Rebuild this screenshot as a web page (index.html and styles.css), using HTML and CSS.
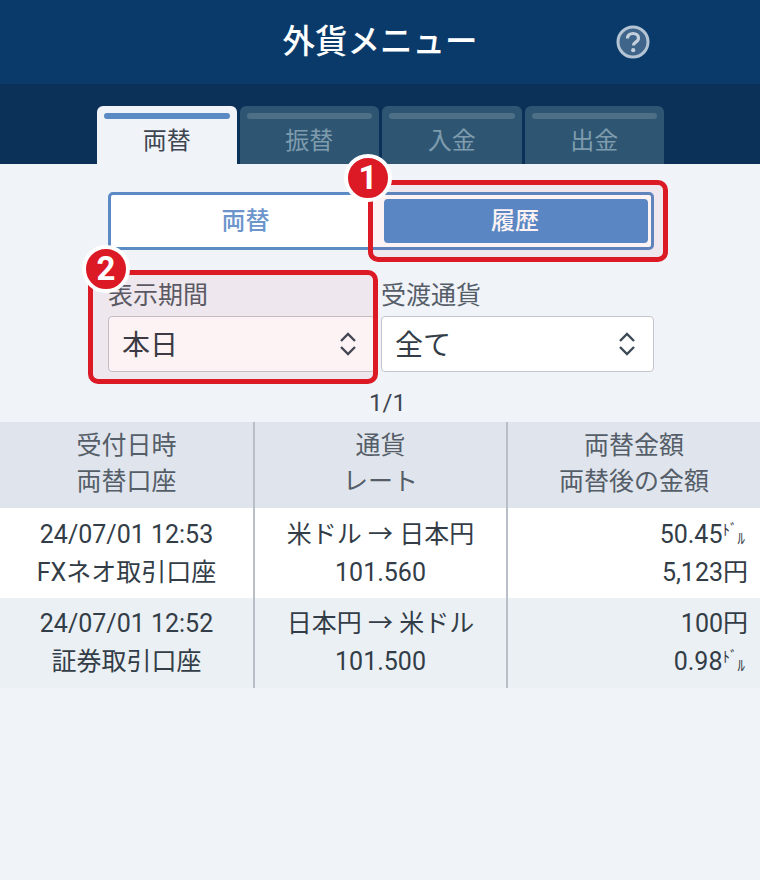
FILE: index.html
```html
<!DOCTYPE html>
<html lang="ja">
<head>
<meta charset="UTF-8">
<meta name="viewport" content="width=device-width, initial-scale=1.0">
<title>外貨メニュー</title>
<link rel="stylesheet" href="styles.css">
</head>
<body>

<div class="header">
    <h1 class="header-title">外貨メニュー</h1>
    <svg class="help-icon" width="34" height="34" viewBox="0 0 34 34" fill="none">
        <circle cx="17" cy="17" r="15" fill="#ffffff" fill-opacity="0.22" stroke="#b4c4d4" stroke-width="3"/>
        <path d="M11.5 13.5c0-3.2 2.4-5 5.6-5 3.1 0 5.4 1.7 5.4 4.5 0 2.1-1.2 3.1-2.7 4.1-1.4.9-2.3 1.6-2.3 3.4" stroke="#c4d0dc" stroke-width="3.2"/>
        <circle cx="17.2" cy="25.2" r="2.1" fill="#c4d0dc"/>
    </svg>
</div>

<div class="tabs">
    <div class="tab active"><span class="tab-bar"></span>両替</div>
    <div class="tab"><span class="tab-bar"></span>振替</div>
    <div class="tab"><span class="tab-bar"></span>入金</div>
    <div class="tab"><span class="tab-bar"></span>出金</div>
</div>

<div class="content">
    <div class="segment">
        <div class="segment-item">両替</div>
        <div class="segment-item selected">履歴</div>
        <div class="callout callout-history"><span class="badge">1</span></div>
    </div>

    <div class="filters">
        <div class="filter">
            <label class="filter-label">表示期間</label>
            <div class="select"><span class="select-text">本日</span>
                <svg width="18" height="26" viewBox="0 0 18 26" fill="none" stroke="#3f4a58" stroke-width="2.4"><path d="M2 10l7-7 7 7"/><path d="M2 16l7 7 7-7"/></svg>
            </div>
        </div>
        <div class="filter">
            <label class="filter-label">受渡通貨</label>
            <div class="select"><span class="select-text">全て</span>
                <svg width="18" height="26" viewBox="0 0 18 26" fill="none" stroke="#3f4a58" stroke-width="2.4"><path d="M2 10l7-7 7 7"/><path d="M2 16l7 7 7-7"/></svg>
            </div>
        </div>
        <div class="callout callout-period"><span class="badge">2</span></div>
    </div>
</div>

<div class="page-count">1/1</div>

<div class="history">
    <div class="row row-head">
        <div class="cell">受付日時<br>両替口座</div>
        <div class="cell">通貨<br>レート</div>
        <div class="cell">両替金額<br>両替後の金額</div>
    </div>
    <div class="row row-first">
        <div class="cell">24/07/01 12:53<br>FXネオ取引口座</div>
        <div class="cell">米ドル → 日本円<br>101.560</div>
        <div class="cell amount">50.45<span class="dollar"><span>ﾄﾞ</span><span class="low">ﾙ</span></span><br>5,123円</div>
    </div>
    <div class="row row-alt">
        <div class="cell">24/07/01 12:52<br>証券取引口座</div>
        <div class="cell">日本円 → 米ドル<br>101.500</div>
        <div class="cell amount">100円<br>0.98<span class="dollar"><span>ﾄﾞ</span><span class="low">ﾙ</span></span></div>
    </div>
</div>

</body>
</html>
```

FILE: styles.css
```css
body {
    font-family: Roboto, "Noto Sans CJK JP", sans-serif;
    margin: 0;
    padding: 0;
    background-color: #f0f3f8;
    color: #333d47;
}
.header {
    position: relative;
    height: 84px;
    background-color: #0a3a6a;
    display: flex;
    align-items: center;
    justify-content: center;
}
.header-title {
    margin: 0;
    color: #fff;
    font-size: 32.5px;
    font-weight: 500;
    line-height: 84px;
}
.help-icon {
    position: absolute;
    left: 616px;
    top: 25px;
}
.tabs {
    height: 58px;
    padding: 22px 0 0 1px;
    background-color: #0c3159;
    display: flex;
    justify-content: center;
    gap: 3px;
}
.tab {
    width: 139.5px;
    box-sizing: border-box;
    padding: 7px 7px 0;
    background-color: #2e5672;
    border-radius: 6px 6px 0 0;
    color: #7f9cae;
    font-size: 24px;
    line-height: 40px;
    text-align: center;
}
.tab-bar {
    display: block;
    height: 6px;
    margin-bottom: 2px;
    border-radius: 3px;
    background-color: #4d7087;
}
.tab.active {
    background-color: #f0f3f8;
    color: #3d4650;
}
.tab.active .tab-bar {
    background-color: #5b8ac5;
}
.content {
    padding: 28px 106px 0 108px;
}
.segment {
    position: relative;
    height: 58px;
    box-sizing: border-box;
    padding: 4px 3px 4px 0;
    background-color: #fff;
    border: 3px solid #5b8ac5;
    border-radius: 5px;
    display: grid;
    grid-template-columns: 273px 264px;
}
.segment-item {
    padding-right: 4px;
    color: #6b95cb;
    font-size: 24px;
    font-weight: 500;
    line-height: 44px;
    text-align: center;
    border-radius: 4px;
}
.segment-item.selected {
    padding-right: 2px;
    background-color: #548ecc;
    color: #fff;
}
.filters {
    position: relative;
    margin-top: 26px;
    display: grid;
    grid-template-columns: 267px 273px;
    gap: 6px;
}
.filter-label {
    display: block;
    color: #555e68;
    font-size: 25px;
    line-height: 40px;
}
.select {
    height: 56px;
    box-sizing: border-box;
    padding: 0 17px 0 13px;
    background-color: #fff;
    border: 1px solid #c2c6cc;
    border-radius: 4px;
    color: #333d47;
    font-size: 28px;
    display: flex;
    align-items: center;
    justify-content: space-between;
}
.select-text {
    padding-bottom: 3px;
}
.callout {
    position: absolute;
    box-sizing: border-box;
    border: 5px solid #dc1a26;
    border-radius: 10px;
    background-color: rgba(220, 26, 38, 0.05);
}
.callout-history {
    left: 257px;
    top: -15px;
    width: 300px;
    height: 82px;
}
.callout-period {
    left: -20px;
    top: -6px;
    width: 290px;
    height: 114px;
}
.badge {
    position: absolute;
    width: 48px;
    height: 48px;
    box-sizing: border-box;
    background-color: #dc1a26;
    border: 4px solid #fff;
    border-radius: 50%;
    color: #fff;
    font-size: 33px;
    font-weight: 700;
    line-height: 40px;
    text-align: center;
}
.callout-history .badge {
    left: -29px;
    top: -31px;
}
.callout-period .badge {
    left: -11px;
    top: -30px;
}
.page-count {
    margin-top: 18px;
    padding-left: 15px;
    color: #3f4852;
    font-size: 24px;
    line-height: 26px;
    text-align: center;
}
.history {
    margin-top: 6px;
}
.row {
    display: grid;
    grid-template-columns: 255px 253px 252px;
    height: 90px;
    background-color: #fff;
    font-size: 25px;
    line-height: 38px;
    text-align: center;
}
.row-head {
    height: 86px;
    background-color: #e0e5ed;
    color: #555e68;
    line-height: 36px;
}
.row-alt {
    background-color: #ebf0f4;
}
.cell {
    padding-top: 7px;
    box-sizing: border-box;
    border-right: 2px solid #b9bfc6;
}
.row-head .cell {
    padding-top: 6px;
}
.row-first .cell {
    padding-top: 8px;
}
.cell:last-child {
    border-right: none;
}
.amount {
    padding-right: 12px;
    text-align: right;
}
.dollar {
    padding-right: 3px;
    font-size: 15px;
    line-height: 1;
}
.dollar span {
    vertical-align: 8px;
}
.dollar .low {
    vertical-align: -1px;
}
```
